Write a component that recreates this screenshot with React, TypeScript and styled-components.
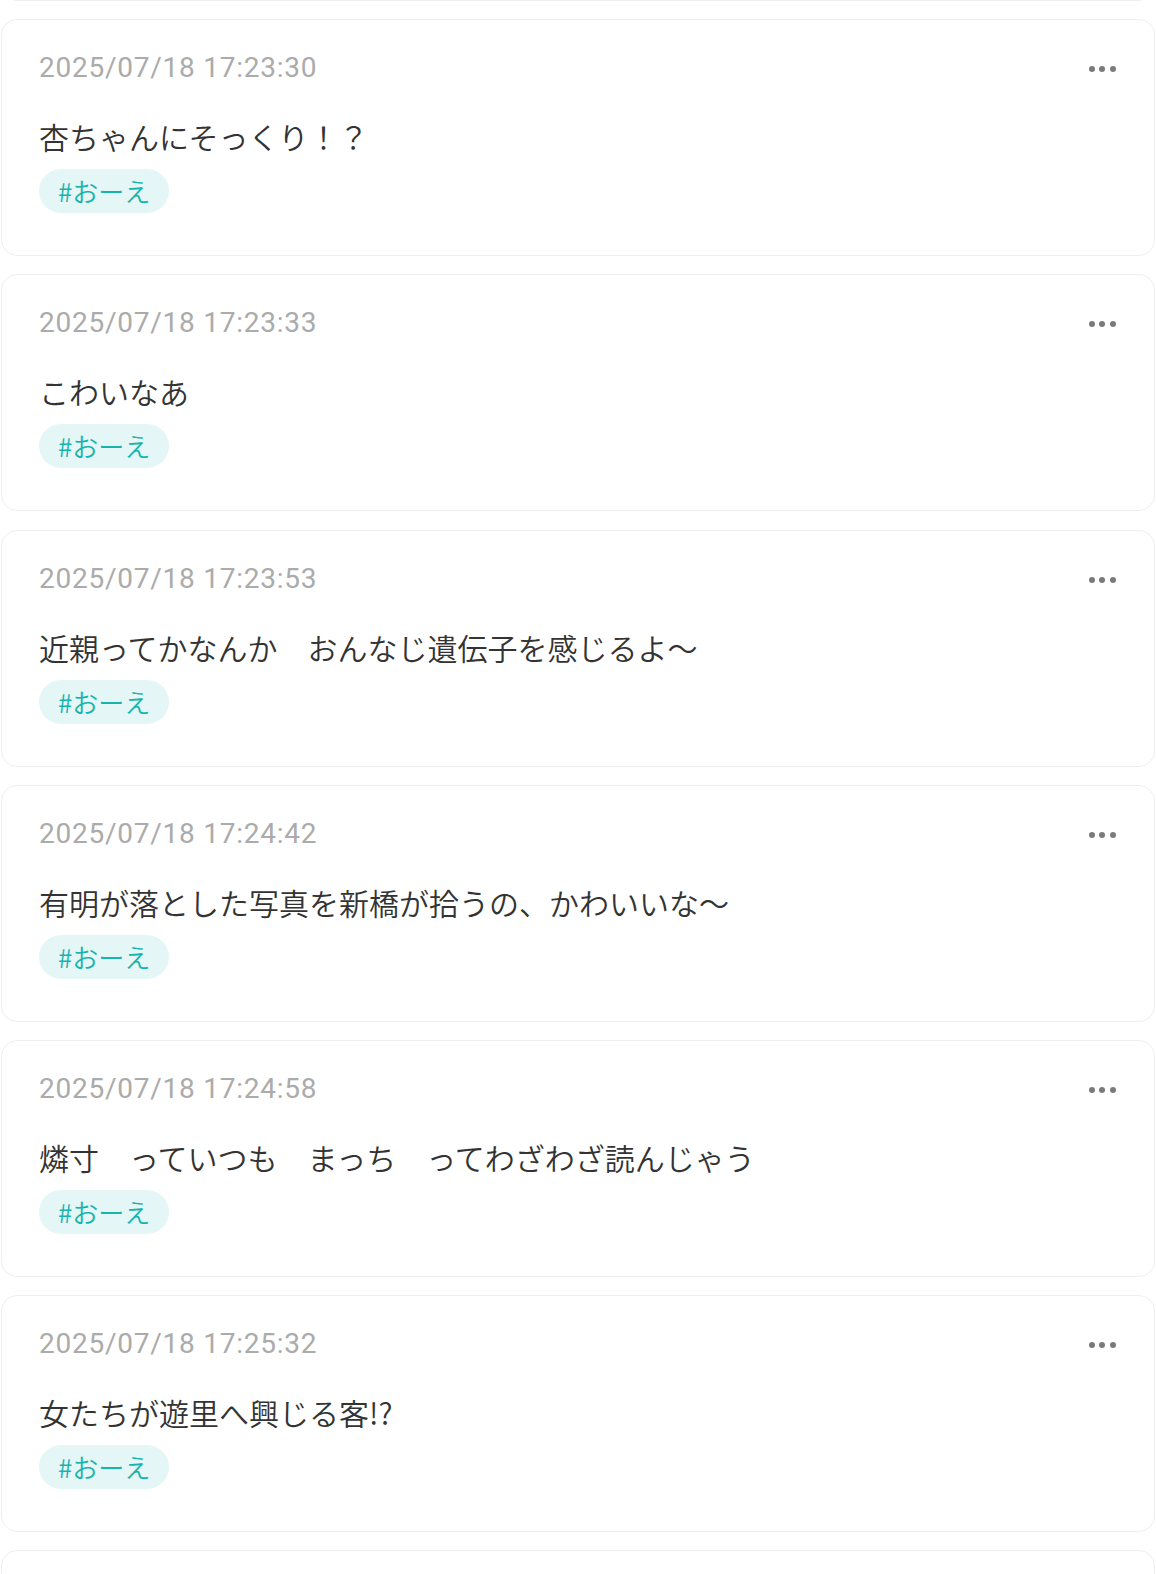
import React from "react";
import styled, { createGlobalStyle } from "styled-components";

const GlobalStyle = createGlobalStyle`
  html, body {
    margin: 0;
    padding: 0;
    background: #ffffff;
  }
  body {
    font-family: "Noto Sans CJK JP", "Noto Sans", sans-serif;
    overflow-x: hidden;
  }
  * { box-sizing: border-box; }
`;

const Feed = styled.main`
  display: flex;
  flex-direction: column;
  gap: 18.2px;
  padding: 0 1px;
`;

const Card = styled.article<{ $hiddenTop?: boolean }>`
  background: #ffffff;
  border: 1px solid #efefef;
  border-radius: 16px;
  padding: 28px 38px 42px 37px;
  margin-top: ${(p) => (p.$hiddenTop ? "-236px" : "0")};
`;

const Header = styled.header`
  display: flex;
  align-items: center;
  justify-content: space-between;
  height: 40px;
`;

const Timestamp = styled.time`
  font-family: Roboto, "Noto Sans", sans-serif;
  font-size: 28px;
  line-height: 40px;
  letter-spacing: 0.75px;
  color: #ababab;
`;

const MoreButton = styled.button`
  display: flex;
  align-items: center;
  gap: 4.7px;
  padding: 0;
  margin: 2px 0 0 0;
  border: none;
  background: transparent;
  cursor: pointer;
`;

const Dot = styled.span`
  width: 6px;
  height: 6px;
  border-radius: 50%;
  background: #7a7a7a;
`;

const Body = styled.p`
  margin: 26px 0 0 0;
  font-family: "Noto Sans CJK JP", sans-serif;
  font-size: 30px;
  font-weight: 350;
  line-height: 45px;
  color: #333333;
  white-space: pre-wrap;
`;

const Tags = styled.div`
  display: flex;
  gap: 10px;
  margin-top: 10px;
`;

const Tag = styled.span`
  display: inline-flex;
  align-items: center;
  height: 44px;
  padding: 0 19px;
  border-radius: 22px;
  background: #e4f6f6;
  color: #17b3ad;
  font-family: "Noto Sans CJK JP", sans-serif;
  font-size: 26px;
  font-weight: 350;
  line-height: 44px;
`;

type Post = { time: string; text: string; tag: string };

const posts: Post[] = [
  { time: "2025/07/18 17:23:21", text: "ふたりの距離感がいい", tag: "#おーえ" },
  { time: "2025/07/18 17:23:30", text: "杏ちゃんにそっくり！？", tag: "#おーえ" },
  { time: "2025/07/18 17:23:33", text: "こわいなあ", tag: "#おーえ" },
  { time: "2025/07/18 17:23:53", text: "近親ってかなんか　おんなじ遺伝子を感じるよ〜", tag: "#おーえ" },
  { time: "2025/07/18 17:24:42", text: "有明が落とした写真を新橋が拾うの、かわいいな〜", tag: "#おーえ" },
  { time: "2025/07/18 17:24:58", text: "燐寸　っていつも　まっち　ってわざわざ読んじゃう", tag: "#おーえ" },
  { time: "2025/07/18 17:25:32", text: "女たちが遊里へ興じる客!?", tag: "#おーえ" },
  { time: "2025/07/18 17:25:47", text: "続きが気になる", tag: "#おーえ" },
];

export default function App() {
  return (
    <>
      <GlobalStyle />
      <Feed>
        {posts.map((p, i) => (
          <Card key={i} $hiddenTop={i === 0}>
            <Header>
              <Timestamp>{p.time}</Timestamp>
              <MoreButton aria-label="more">
                <Dot />
                <Dot />
                <Dot />
              </MoreButton>
            </Header>
            <Body>{p.text}</Body>
            <Tags>
              <Tag>{p.tag}</Tag>
            </Tags>
          </Card>
        ))}
      </Feed>
    </>
  );
}
